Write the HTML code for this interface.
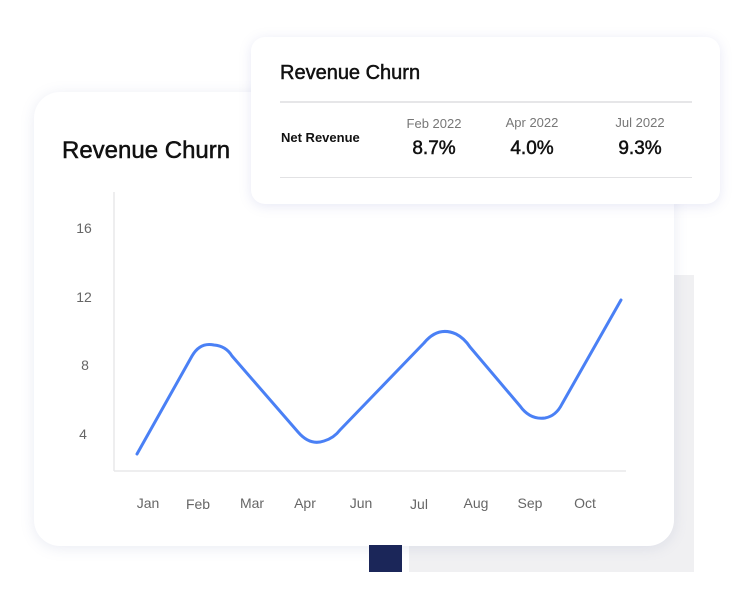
<!DOCTYPE html>
<html><head><meta charset="utf-8"><style>
body{margin:0;width:754px;height:606px;background:#fff;position:relative;overflow:hidden;font-family:"Liberation Sans",sans-serif;}
.abs{position:absolute}
.gray{left:409px;top:275px;width:285px;height:297px;background:#f0f0f2}
.navy{left:369px;top:545px;width:33px;height:27px;background:#1b2659}
.card{left:34px;top:92px;width:640px;height:454px;background:#fff;border-radius:26px;box-shadow:0 2px 14px rgba(120,130,180,0.16)}
.top{left:251px;top:37px;width:469px;height:167px;background:#fff;border-radius:14px;box-shadow:0 2px 12px rgba(120,130,200,0.18)}
.t{color:#111}
.m{-webkit-text-stroke:0.5px #111}
</style></head><body>
<div class="abs gray"></div>
<div class="abs card"></div>
<div class="abs navy"></div>
<div class="abs t m" style="left:62px;top:137px;font-size:24px;">Revenue Churn</div>
<svg class="abs" style="left:0;top:0" width="754" height="606">
<line x1="114" y1="192" x2="114" y2="471" stroke="#e8e8ea" stroke-width="1.5"/>
<line x1="114" y1="471" x2="626" y2="471" stroke="#e8e8ea" stroke-width="1.5"/>
<path d="M137,454 L192,356 Q200,342 214,345 Q226,346 232,356 L298,432 Q310,446 324,441 Q334,438 340,430 L424,343 Q438,326 456,334 Q464,338 470,347 L520,406 Q530,420 545,418 Q556,416 562,404 L621,300" fill="none" stroke="#4a80f5" stroke-width="3" stroke-linejoin="round" stroke-linecap="round"/>
<g font-family="Liberation Sans" font-size="14" fill="#666" text-anchor="middle">
<text x="84" y="233">16</text><text x="84" y="302">12</text><text x="85" y="370">8</text><text x="83" y="439">4</text>
<text x="148" y="508">Jan</text><text x="198" y="509">Feb</text><text x="252" y="508">Mar</text><text x="305" y="508">Apr</text><text x="361" y="508">Jun</text><text x="419" y="509">Jul</text><text x="476" y="508">Aug</text><text x="530" y="508">Sep</text><text x="585" y="508">Oct</text>
</g>
</svg>
<div class="abs top"></div>
<div class="abs t m" style="left:280px;top:62px;font-size:20px;">Revenue Churn</div>
<div class="abs" style="left:280px;top:101px;width:412px;height:2px;background:#e6e6e8"></div>
<div class="abs" style="left:280px;top:177px;width:412px;height:1px;background:#e2e2e4"></div>
<div class="abs t" style="left:281px;top:130px;font-size:13px;font-weight:bold;">Net Revenue</div>
<div class="abs" style="left:384px;top:116px;width:100px;text-align:center;color:#777;font-size:13px">Feb 2022</div>
<div class="abs t m" style="left:384px;top:138px;width:100px;text-align:center;font-size:19px">8.7%</div>
<div class="abs" style="left:482px;top:115px;width:100px;text-align:center;color:#777;font-size:13px">Apr 2022</div>
<div class="abs t m" style="left:482px;top:138px;width:100px;text-align:center;font-size:19px">4.0%</div>
<div class="abs" style="left:590px;top:115px;width:100px;text-align:center;color:#777;font-size:13px">Jul 2022</div>
<div class="abs t m" style="left:590px;top:138px;width:100px;text-align:center;font-size:19px">9.3%</div>
</body></html>
